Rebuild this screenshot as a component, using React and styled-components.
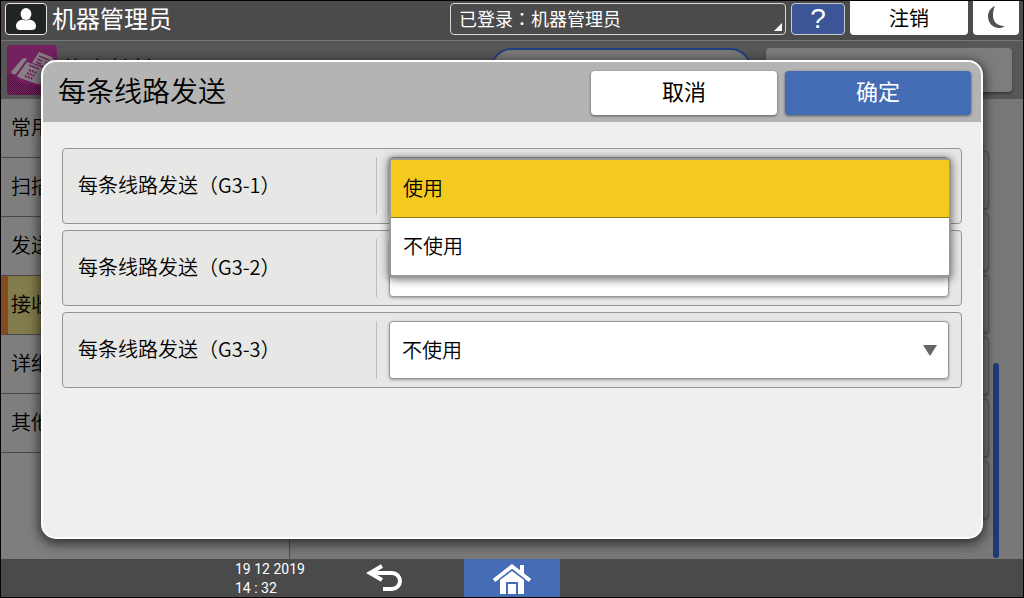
import React, { useState } from "react";
import styled, { createGlobalStyle } from "styled-components";

const GlobalStyle = createGlobalStyle`
  * { box-sizing: border-box; }
  body { margin: 0; background: #000; }
  button, select, input { font: inherit; }
`;

const Screen = styled.div`
  position: relative;
  display: flex;
  flex-direction: column;
  min-height: 100vh;
  border: 1px solid #060204;
  background: #787878;
  color: #000;
  font-family: "Noto Sans CJK SC", sans-serif;
  font-size: 20px;
  line-height: 28px;
  overflow: hidden;
`;

const TopBar = styled.header`
  display: flex;
  align-items: flex-start;
  height: 40px;
  padding: 0 4px;
  gap: 5px;
  background: #4b4b4b;
  border-bottom: 1px solid #767676;
  color: #fff;
`;

const UserBadge = styled.span`
  display: flex;
  width: 42px;
  height: 32px;
  margin-top: 2px;
  border: 1px solid #e8e8e8;
  border-radius: 4px;
  background: #202423;
`;

const UserName = styled.h1`
  flex: 1;
  margin: 0;
  font-size: 24px;
  line-height: 33px;
  font-weight: 400;
`;

const LoginStatus = styled.button`
  position: relative;
  width: 336px;
  height: 32px;
  margin-top: 2px;
  padding: 0 8px 2px;
  border: 1px solid #d8d8d8;
  border-radius: 4px;
  background: transparent;
  color: #fff;
  font-size: 18px;
  line-height: 28px;
  text-align: left;

  &::after {
    content: "";
    position: absolute;
    right: 3px;
    bottom: 3px;
    border-left: 8px solid transparent;
    border-bottom: 8px solid #fff;
  }
`;

const CenteredColon = styled.span`
  font-family: "Noto Sans CJK TC", sans-serif;
`;

const HelpButton = styled.button`
  width: 54px;
  height: 32px;
  margin-top: 2px;
  padding: 0;
  border: 1px solid #c9c9d2;
  border-radius: 4px;
  background: #3b5596;
  color: #fff;
  font-family: "Liberation Sans", sans-serif;
  font-size: 28px;
  line-height: 28px;
`;

const BarButton = styled.button`
  display: flex;
  align-items: center;
  justify-content: center;
  width: ${(p) => p.$width};
  height: 34px;
  padding: 0;
  border: 0;
  border-radius: 0 0 4px 4px;
  background: #fff;
  color: #000;
`;

const AppHeader = styled.div`
  display: flex;
  align-items: flex-start;
  gap: 4px;
  height: 58px;
  padding: 4px 11px 0 6px;
  background: #575757;
`;

const AppTitle = styled.h2`
  flex: 1;
  margin: 10px 0 0;
  font-size: 24px;
  line-height: 28px;
  font-weight: 400;
`;

const SearchPill = styled.div`
  width: 262px;
  height: 44px;
  margin: 3px 10px 0 0;
  padding: 8px 16px;
  border: 2px solid #203f82;
  border-radius: 22px;
  background: #7b7b7b;
`;

const HeaderButton = styled.button`
  width: 246px;
  height: 44px;
  margin-top: 3px;
  border: 0;
  border-radius: 4px;
  background: #7d7d7d;
  box-shadow: 0 2px 2px #3c3c3c;
`;

const Body = styled.div`
  display: flex;
  flex: 1;
`;

const Sidebar = styled.nav`
  width: 289px;
  border-right: 1px solid #4d4d4d;
  background: #7e7e7e;
`;

const SideItem = styled.a`
  display: flex;
  align-items: center;
  height: 59px;
  padding: 0 0 2px ${(p) => (p.$active ? "3px" : "10px")};
  border-bottom: 1px solid #484848;
  border-left: ${(p) => (p.$active ? "7px solid #844a22" : "0")};
  background: ${(p) => (p.$active ? "#827b4b" : "transparent")};
  color: #000;
  font-weight: 350;
  text-decoration: none;
`;

const Content = styled.main`
  display: flex;
  flex: 1;
  gap: 4px;
  padding-right: 24px;
`;

const SettingList = styled.div`
  display: flex;
  flex: 1;
  flex-direction: column;
  gap: 4px;
  padding: 52px 0 0 12px;
`;

const SettingRow = styled.div`
  height: 58px;
  border: 1px solid #555;
  border-radius: 4px;
  background: #767676;
  box-shadow: 0 1px 2px #555;
`;

const ScrollThumb = styled.div`
  align-self: flex-end;
  width: 6px;
  height: 195px;
  margin-bottom: 1px;
  border-radius: 3px;
  background: #1e3b78;
`;

const Footer = styled.footer`
  display: flex;
  height: 38px;
  background: #4a4a4b;
  color: #fff;
`;

const Clock = styled.time`
  width: 100px;
  margin-left: 234px;
  padding-top: 1px;
  font-family: Roboto, sans-serif;
  font-size: 14px;
  line-height: 19px;
`;

const FooterButton = styled.button`
  display: flex;
  justify-content: center;
  width: ${(p) => (p.$home ? "96px" : "98px")};
  height: 38px;
  margin-right: ${(p) => (p.$home ? "0" : "31px")};
  padding: 0;
  border: 0;
  background: ${(p) => (p.$home ? "#456cb5" : "transparent")};
`;

const Dialog = styled.section`
  position: absolute;
  top: 59px;
  right: 40px;
  bottom: 58px;
  left: 40px;
  border: 2px solid #fff;
  border-radius: 15px;
  background: #efefef;
  box-shadow: 0 3px 12px 2px rgba(0, 0, 0, 0.6);
`;

const DialogHead = styled.div`
  display: flex;
  align-items: center;
  gap: 8px;
  height: 60px;
  padding: 2px 10px 0 15px;
  border-radius: 13px 13px 0 0;
  background: #b4b4b4;
`;

const DialogTitle = styled.h2`
  flex: 1;
  margin: 0;
  padding-bottom: 6px;
  font-size: 28px;
  line-height: 40px;
  font-weight: 350;
`;

const DialogButton = styled.button`
  width: 186px;
  height: 44px;
  padding: 0 0 6px;
  border: 0;
  border-radius: 4px;
  background: ${(p) => (p.$primary ? "#446cb4" : "#fff")};
  color: ${(p) => (p.$primary ? "#fff" : "#000")};
  font-size: 22px;
  box-shadow: 0 1px 3px rgba(0, 0, 0, 0.5);
`;

const Lines = styled.div`
  display: flex;
  flex-direction: column;
  gap: 6px;
  padding: 26px 19px;
`;

const LineRow = styled.div`
  display: flex;
  align-items: center;
  height: 76px;
  padding: 8px 12px 8px 15px;
  border: 1px solid #959595;
  border-radius: 4px;
  background: #e7e7e6;
`;

const LineLabel = styled.label`
  display: flex;
  align-items: center;
  width: 299px;
  height: 58px;
  padding-bottom: 2px;
  border-right: 1px solid #bebebe;
  font-weight: 350;
`;

const Field = styled.div`
  position: relative;
  flex: 1;
  margin-left: 12px;
`;

const Select = styled.select`
  display: block;
  width: 100%;
  height: 58px;
  padding: 0 40px 0 12px;
  border: 1px solid #999;
  border-radius: 4px;
  appearance: none;
  background: #fff;
  color: #000;
  font-weight: 350;
  box-shadow: 0 1px 3px rgba(0, 0, 0, 0.35);
`;

const Arrow = styled.span`
  position: absolute;
  top: 24px;
  right: 12px;
  border-top: 11px solid #646464;
  border-left: 7px solid transparent;
  border-right: 7px solid transparent;
  pointer-events: none;
`;

const Menu = styled.ul`
  position: absolute;
  z-index: 2;
  top: 1px;
  right: -2px;
  left: 0;
  margin: 0;
  padding: 0;
  border: 2px solid #999;
  border-bottom-width: 3px;
  border-radius: 4px;
  background: #fff;
  box-shadow: 0 1px 9px 1px rgba(0, 0, 0, 0.5);
  list-style: none;
`;

const MenuItem = styled.li`
  display: flex;
  align-items: center;
  height: ${(p) => (p.$current ? "58px" : "57px")};
  padding: 0 12px 2px;
  border-bottom: ${(p) => (p.$current ? "1px solid #8f7a18" : "0")};
  background: ${(p) => (p.$current ? "#f5ca1e" : "transparent")};
  font-weight: 350;
`;

const UserIcon = () => (
  <svg width="40" height="30" viewBox="0 0 40 30" fill="#fff" aria-hidden="true">
    <ellipse cx="20" cy="10" rx="5.4" ry="6" />
    <path d="M10 22c0-4 3-6 7-6.600 2 1.200 4 1.200 6 0 4 .6 7 2.600 7 6.600 0 3-2 4-4 4H14c-2 0-4-1-4-4z" />
  </svg>
);

const MoonIcon = () => (
  <svg width="46" height="34" viewBox="0 0 46 34" aria-hidden="true">
    <path d="M22 5c-4.500 2-7 6-7 10.500C15 22 20 27 26 27c2 0 4-.5 5.500-2C24 25 20 21 20 14c0-3.500.8-6.500 2-9z" fill="#505050" />
  </svg>
);

const FaxIcon = () => (
  <svg width="50" height="50" viewBox="0 0 50 50" aria-hidden="true">
    <defs>
      <pattern id="shade" width="2" height="2" patternUnits="userSpaceOnUse">
        <rect width="1" height="1" fill="#4e1640" />
        <rect x="1" y="1" width="1" height="1" fill="#4e1640" />
      </pattern>
    </defs>
    <rect width="50" height="50" rx="4" fill="#75205f" />
    <path d="M4 29 9 33 12 37 34 42 45 28 50 24V50H4Q0 50 0 46V30z" fill="url(#shade)" />
    <path d="M25 18 32 7 45 12 50 20 44 23z" fill="#858085" />
    <path d="M32 11l10 4M30 14l5 2M29 17l5 2M38 17l4 2" stroke="#75205f" strokeWidth="1.500" />
    <path d="M4 27 15 14q3-2 5 0L9 29q-4 1-5-2z" fill="#858085" />
    <path d="M10 31 20 17 42 25 34 38q-2 2-4 1L13 33z" fill="#858085" />
    <path d="M9 30 20 15" stroke="#75205f" strokeWidth="1" />
    <path d="M22 20l10 4" stroke="#75205f" strokeWidth="1.500" />
    <path d="M22 25l8 3M20 28l8 3M18 31l8 3" stroke="#75205f" strokeWidth="2" strokeDasharray="2 1" />
  </svg>
);

const BackIcon = () => (
  <svg width="40" height="38" viewBox="0 0 40 38" fill="none" stroke="#fff" strokeWidth="4" aria-hidden="true">
    <path d="M8 14H28a8 8 0 0 1 0 16H19" />
    <path d="M18 7 6 14 18 21" />
  </svg>
);

const HomeIcon = () => (
  <svg width="40" height="38" viewBox="0 0 40 38" aria-hidden="true">
    <path d="M28 6h4v11l-4-4z" fill="#fff" />
    <path d="M2 21.500 20 7.500 38 21.500" fill="none" stroke="#fff" strokeWidth="4" />
    <path d="M8 22 20 13 32 22V35H26V23H14V35H8z" fill="#fff" />
    <path d="M8 21 20 12 32 21V35H26V23H14V35H8z" fill="#fff" />
    <path d="M7 20.500 20 10.500 33 20.500" fill="none" stroke="#456cb5" strokeWidth="1" />
    <rect x="16" y="25" width="8" height="10" fill="#fff" />
  </svg>
);

const sideItems = ["常用", "扫描", "发送", "接收", "详细", "其他"];
const settingRows = [1, 2, 3, 4, 5, 6];
const options = ["使用", "不使用"];
const lines = ["G3-1", "G3-2", "G3-3"];

function LineSetting({ line, initial, open }) {
  const [value, setValue] = useState(initial);
  const id = "line-" + line;
  return (
    <LineRow>
      <LineLabel htmlFor={id}>每条线路发送（{line}）</LineLabel>
      <Field>
        <Select id={id} value={value} onChange={(e) => setValue(e.target.value)}>
          {options.map((o) => (
            <option key={o}>{o}</option>
          ))}
        </Select>
        <Arrow />
        {open && (
          <Menu role="listbox" aria-label={line}>
            {options.map((o) => (
              <MenuItem
                key={o}
                role="option"
                aria-selected={o === value}
                $current={o === value}
                onClick={() => setValue(o)}
              >
                {o}
              </MenuItem>
            ))}
          </Menu>
        )}
      </Field>
    </LineRow>
  );
}

export default function App() {
  return (
    <Screen>
      <GlobalStyle />
      <TopBar>
        <UserBadge><UserIcon /></UserBadge>
        <UserName>机器管理员</UserName>
        <LoginStatus>已登录<CenteredColon>：</CenteredColon>机器管理员</LoginStatus>
        <HelpButton>?</HelpButton>
        <BarButton $width="118px">注销</BarButton>
        <BarButton $width="46px" aria-label="Sleep"><MoonIcon /></BarButton>
      </TopBar>
      <AppHeader>
        <FaxIcon />
        <AppTitle>传真特性</AppTitle>
        <SearchPill>
          <svg width="20" height="20" viewBox="0 0 20 20" aria-hidden="true">
            <circle cx="8" cy="8" r="8" fill="none" stroke="#203f82" strokeWidth="3" />
          </svg>
        </SearchPill>
        <HeaderButton aria-label="Menu" />
      </AppHeader>
      <Body>
        <Sidebar>
          {sideItems.map((item) => (
            <SideItem key={item} href="#" $active={item === "接收"}>{item}</SideItem>
          ))}
        </Sidebar>
        <Content>
          <SettingList>
            {settingRows.map((n) => <SettingRow key={n} />)}
          </SettingList>
          <ScrollThumb />
        </Content>
      </Body>
      <Footer>
        <Clock>19 12 2019<br />14 : 32</Clock>
        <FooterButton aria-label="Back"><BackIcon /></FooterButton>
        <FooterButton $home aria-label="Home"><HomeIcon /></FooterButton>
      </Footer>
      <Dialog role="dialog" aria-labelledby="dialog-title">
        <DialogHead>
          <DialogTitle id="dialog-title">每条线路发送</DialogTitle>
          <DialogButton>取消</DialogButton>
          <DialogButton $primary>确定</DialogButton>
        </DialogHead>
        <Lines>
          {lines.map((line, i) => (
            <LineSetting key={line} line={line} initial={i === 0 ? "使用" : "不使用"} open={i === 0} />
          ))}
        </Lines>
      </Dialog>
    </Screen>
  );
}
